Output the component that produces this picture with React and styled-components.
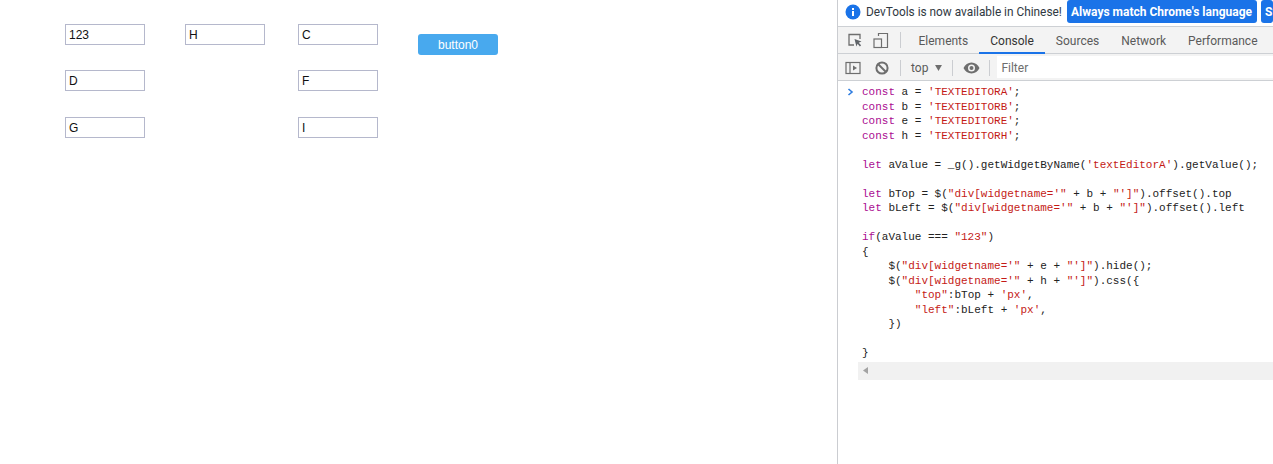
import React from "react";
import styled, { createGlobalStyle } from "styled-components";

const Global = createGlobalStyle`
  html, body { margin: 0; padding: 0; background: #fff; height: 100%; overflow: hidden; }
  #root { height: 100%; }
`;

const Shell = styled.div`
  display: flex;
  width: 1273px;
  height: 464px;
  overflow: hidden;
`;

const Page = styled.main`
  width: 837px;
  flex: none;
  padding: 24px 0 0 65px;
  box-sizing: border-box;
  display: grid;
  grid-template-columns: 120px 113px 120px 80px;
  grid-template-rows: 46px 47px 21px;
  align-content: start;
  font-family: "Liberation Sans", Arial, sans-serif;
`;

const Field = styled.div`
  width: 80px;
  height: 21px;
  box-sizing: border-box;
  border: 1px solid #b5b8cc;
  padding: 0 3px;
  font-size: 12px;
  line-height: 20px;
  color: #111;
  grid-column: ${(p) => p.$col};
  grid-row: ${(p) => p.$row};
`;

const ActionButton = styled.button`
  grid-column: 4;
  grid-row: 1;
  width: 80px;
  height: 21px;
  margin-top: 10px;
  border: 0;
  border-radius: 3px;
  padding: 0;
  background: #48a9ee;
  color: #fff;
  font: 12px "Liberation Sans", Arial, sans-serif;
`;

const DevTools = styled.aside`
  flex: 1;
  min-width: 0;
  border-left: 1px solid #cbcdd1;
  display: flex;
  flex-direction: column;
  font-family: Roboto, "Noto Sans", sans-serif;
  overflow: hidden;
`;

const InfoBar = styled.div`
  height: 26px;
  flex: none;
  border-bottom: 1px solid #cdd0d4;
  display: flex;
  align-items: flex-start;
  padding-left: 7px;
  white-space: nowrap;
`;

const InfoText = styled.span`
  font-size: 11.85px;
  line-height: 24px;
  margin-left: 5px;
  width: 195px;
  flex: none;
  color: #303942;
`;

const InfoButton = styled.button`
  flex: none;
  height: 23px;
  width: ${(p) => p.$w}px;
  margin-left: ${(p) => p.$ml}px;
  border: 0;
  border-radius: 3px;
  padding: 0 0 0 4px;
  background: #1a73e8;
  color: #fff;
  text-align: left;
  overflow: hidden;
  white-space: nowrap;
  font: 700 12px Roboto, "Noto Sans", sans-serif;
`;

const TabBar = styled.div`
  height: 26px;
  flex: none;
  border-bottom: 1px solid #cdd0d4;
  background: #f3f3f3;
  display: flex;
  align-items: stretch;
  white-space: nowrap;
`;

const IconSlot = styled.span`
  flex: none;
  display: flex;
  align-items: center;
  justify-content: center;
  width: ${(p) => p.$w || 26}px;
  margin-left: ${(p) => p.$ml || 0}px;
`;

const InfoIcon = styled(IconSlot)`
  height: 24px;
`;

const Sep = styled.span`
  flex: none;
  width: 1px;
  height: 16px;
  align-self: center;
  background: #cbcdd1;
  margin: ${(p) => p.$m};
`;

const Tab = styled.span`
  flex: none;
  font-size: 12px;
  line-height: 29px;
  color: ${(p) => (p.$active ? "#333" : "#5a5a5a")};
  box-sizing: border-box;
  height: 27px;
  padding: 0 11px;
  border-bottom: 2px solid ${(p) => (p.$active ? "#1a73e8" : "transparent")};
`;

const ConsoleBar = styled.div`
  height: 24px;
  padding-top: 2px;
  flex: none;
  border-bottom: 1px solid #cdd0d4;
  background: #f3f3f3;
  display: flex;
  align-items: center;
  white-space: nowrap;
`;

const Context = styled.span`
  flex: none;
  display: flex;
  align-items: center;
  gap: 7px;
  margin-left: 1px;
  font-size: 12px;
  color: #5a5a5a;
`;

const Filter = styled.div`
  flex: 1;
  align-self: stretch;
  margin: 0 0 2px;
  background: #fff;
  font-size: 12px;
  line-height: 25px;
  padding-left: 4px;
  color: #6e6e6e;
`;

const Output = styled.div`
  position: relative;
  flex: 1;
  padding: 4px 0 0 24px;
  background: #fff;
`;

const Prompt = styled.svg`
  position: absolute;
  left: 9px;
  top: 7px;
`;

const Code = styled.pre`
  margin: 0;
  font: 11px/14.5px "Liberation Mono", "DejaVu Sans Mono", monospace;
  color: #222;
`;

const Kw = styled.span`color: #aa0d91;`;
const Str = styled.span`color: #c41a16;`;

const Scroll = styled.div`
  height: 18px;
  margin: 1px 0 0 -4px;
  background: #f1f1f1;
  display: flex;
  align-items: center;
  padding-left: 5px;
`;

const fields = [
  ["123", 1, 1], ["H", 2, 1], ["C", 3, 1],
  ["D", 1, 2], ["F", 3, 2],
  ["G", 1, 3], ["I", 3, 3],
];

export default function App() {
  return (
    <Shell>
      <Global />
      <Page>
        {fields.map(([t, c, r]) => (
          <Field key={t} $col={c} $row={r}>{t}</Field>
        ))}
        <ActionButton>button0</ActionButton>
      </Page>
      <DevTools>
        <InfoBar>
          <InfoIcon $w={16}>
            <svg width="16" height="16" viewBox="0 0 16 16">
              <circle cx="8" cy="8" r="7.500" fill="#1a73e8" />
              <rect x="7" y="7" width="2" height="5" fill="#fff" />
              <rect x="7" y="4" width="2" height="2" fill="#fff" />
            </svg>
          </InfoIcon>
          <InfoText>DevTools is now available in Chinese!</InfoText>
          <InfoButton $w={190} $ml={6}>Always match Chrome's language</InfoButton>
          <InfoButton $w={12} $ml={4}>Switch DevTools</InfoButton>
        </InfoBar>
        <TabBar>
          <IconSlot $w={16} $ml={9}>
            <svg width="16" height="16" viewBox="0 0 16 16" fill="none">
              <path d="M7 13H2V2.500h11V7" stroke="#6e6e6e" strokeWidth="1.300" />
              <path d="M7.500 7l7 2.600-2.800 1.100 2.400 2.600-1.200 1.100-2.300-2.600-1.200 2.600z" fill="#5f6368" />
            </svg>
          </IconSlot>
          <IconSlot $w={16} $ml={10}>
            <svg width="16" height="17" viewBox="0 0 16 17" fill="none" stroke="#6e6e6e" strokeWidth="1.200">
              <path d="M5.500 4V1.500h9v14H9" />
              <rect x="1" y="7" width="7.500" height="8.500" />
            </svg>
          </IconSlot>
          <Sep $m="0 6.5px 0 11px" />
          <Tab>Elements</Tab>
          <Tab $active>Console</Tab>
          <Tab>Sources</Tab>
          <Tab>Network</Tab>
          <Tab>Performance</Tab>
        </TabBar>
        <ConsoleBar>
          <IconSlot $w={16} $ml={7}>
            <svg width="16" height="14" viewBox="0 0 16 14" fill="none">
              <rect x="1" y="1.500" width="14" height="11" stroke="#6e6e6e" strokeWidth="1.200" />
              <path d="M5 1.500v11" stroke="#6e6e6e" strokeWidth="1.200" />
              <path d="M8 4.500l4 2.500-4 2.500z" fill="#6e6e6e" />
            </svg>
          </IconSlot>
          <IconSlot $w={14} $ml={14}>
            <svg width="14" height="14" viewBox="0 0 14 14" fill="none" stroke="#6e6e6e" strokeWidth="2">
              <circle cx="7" cy="7" r="5.600" />
              <path d="M3 3l8 8" />
            </svg>
          </IconSlot>
          <Sep $m="0 9px 0 11px" />
          <Context>
            top
            <svg width="7" height="6" viewBox="0 0 8 7"><path d="M0 0h8L4 7z" fill="#6e6e6e" /></svg>
          </Context>
          <Sep $m="0 10px 0 10px" />
          <IconSlot $w={17}>
            <svg width="17" height="12" viewBox="0 0 17 12">
              <path fillRule="evenodd" d="M8.500 0.500C5 0.500 2 2.700 0.500 6c1.500 3.300 4.500 5.500 8 5.500s6.500-2.200 8-5.500C15 2.700 12 0.500 8.500 0.500zM8.500 9.500a3.500 3.500 0 1 1 0-7 3.500 3.500 0 0 1 0 7z" fill="#6e6e6e" />
              <circle cx="8.500" cy="6" r="2" fill="#6e6e6e" />
            </svg>
          </IconSlot>
          <Sep $m="0 7px 0 9px" />
          <Filter>Filter</Filter>
        </ConsoleBar>
        <Output>
          <Prompt width="7" height="8" viewBox="0 0 7 8" fill="none">
            <path d="M1.500 1L5 4 1.500 7" stroke="#2f7de0" strokeWidth="1.600" />
          </Prompt>
          <Code>
            <Kw>const</Kw> a = <Str>'TEXTEDITORA'</Str>;{"\n"}
            <Kw>const</Kw> b = <Str>'TEXTEDITORB'</Str>;{"\n"}
            <Kw>const</Kw> e = <Str>'TEXTEDITORE'</Str>;{"\n"}
            <Kw>const</Kw> h = <Str>'TEXTEDITORH'</Str>;{"\n\n"}
            <Kw>let</Kw> aValue = _g().getWidgetByName(<Str>'textEditorA'</Str>).getValue();{"\n\n"}
            <Kw>let</Kw> bTop = $(<Str>"div[widgetname='"</Str> + b + <Str>"']"</Str>).offset().top{"\n"}
            <Kw>let</Kw> bLeft = $(<Str>"div[widgetname='"</Str> + b + <Str>"']"</Str>).offset().left{"\n\n"}
            <Kw>if</Kw>(aValue === <Str>"123"</Str>){"\n"}
            {"{\n"}
            {"    "}$(<Str>"div[widgetname='"</Str> + e + <Str>"']"</Str>).hide();{"\n"}
            {"    "}$(<Str>"div[widgetname='"</Str> + h + <Str>"']"</Str>).css{"({\n"}
            {"        "}<Str>"top"</Str>:bTop + <Str>'px'</Str>,{"\n"}
            {"        "}<Str>"left"</Str>:bLeft + <Str>'px'</Str>,{"\n"}
            {"    })\n\n"}
            {"}"}
          </Code>
          <Scroll>
            <svg width="5" height="7" viewBox="0 0 5 7"><path d="M5 0v7L0 3.500z" fill="#a3a3a3" /></svg>
          </Scroll>
        </Output>
      </DevTools>
    </Shell>
  );
}
